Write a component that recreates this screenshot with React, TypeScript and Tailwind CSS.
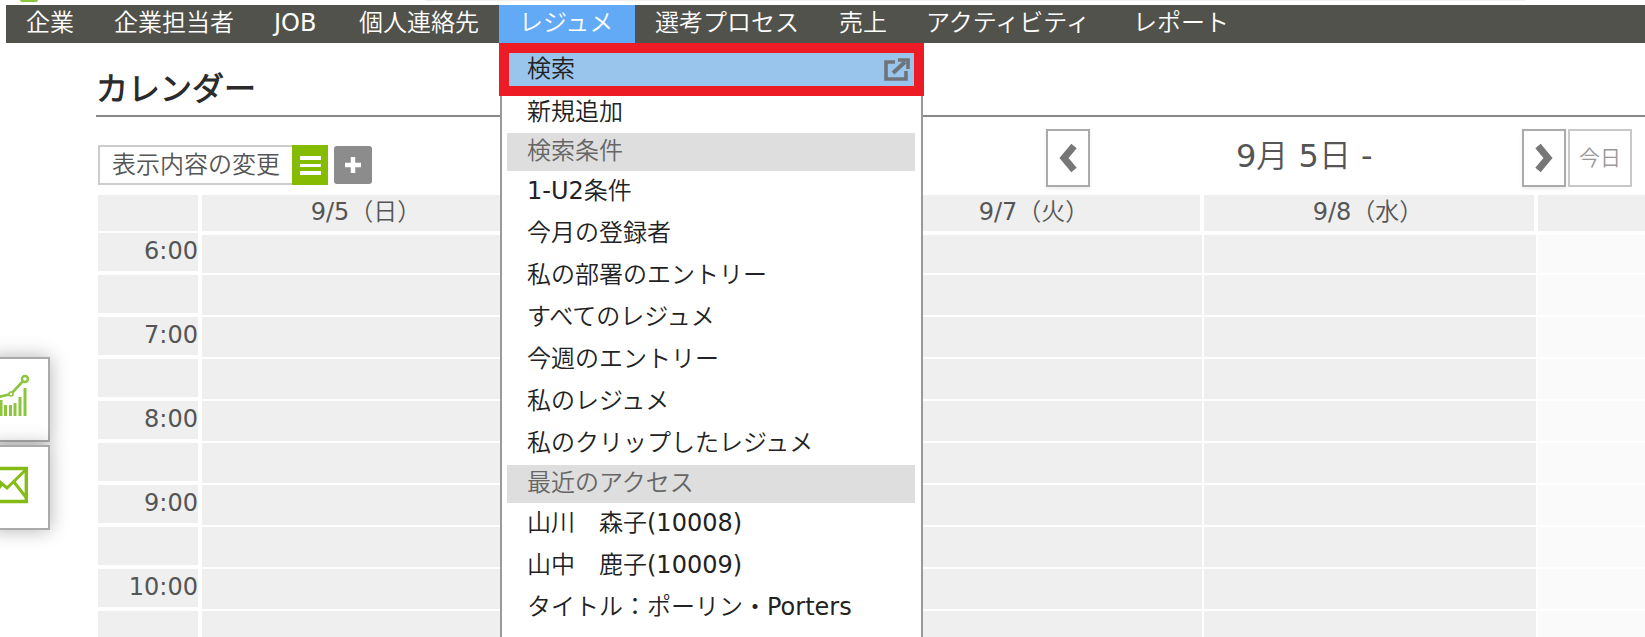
const navItems = [
  { label: "企業", width: "w-[88px]" },
  { label: "企業担当者", width: "w-[160px]" },
  { label: "JOB", width: "w-[85px]" },
  { label: "個人連絡先", width: "w-[160px]" },
  { label: "レジュメ", width: "w-[136px]", active: true },
  { label: "選考プロセス", width: "w-[184px]" },
  { label: "売上", width: "w-[87px]" },
  { label: "アクティビティ", width: "w-[207px]" },
  { label: "レポート", width: "w-[116px]" },
];
const times = ["6:00", "", "7:00", "", "8:00", "", "9:00", "", "10:00", ""];
const days = ["9/5（日）", "", "9/7（火）", "9/8（水）"];

type MenuEntry = { label: string; section?: boolean };

const menuEntries: MenuEntry[] = [
  { label: "検索条件", section: true },
  { label: "1-U2条件" },
  { label: "今月の登録者" },
  { label: "私の部署のエントリー" },
  { label: "すべてのレジュメ" },
  { label: "今週のエントリー" },
  { label: "私のレジュメ" },
  { label: "私のクリップしたレジュメ" },
  { label: "最近のアクセス", section: true },
  { label: "山川　森子(10008)" },
  { label: "山中　鹿子(10009)" },
  { label: "タイトル：ポーリン・Porters" },
];

function NavBar() {
  return (
    <nav className="ml-[6px] flex h-[38px] items-center bg-[#52524c] text-[24px] leading-none text-white">
      {navItems.map((item) => (
        <a
          key={item.label}
          className={`flex h-full items-center whitespace-nowrap pb-[2px] pl-5 ${item.width} ${item.active ? "bg-[#62aaf6]" : ""}`}
        >
          {item.label}
        </a>
      ))}
    </nav>
  );
}

function DropdownMenu() {
  return (
    <div className="absolute left-[499px] top-[43px] z-20 w-[425px]">
      <div className="box-border flex h-[53px] items-center justify-between border-[10px] border-[#ed1c24] bg-[#99c4ec] pl-[18px] pr-[3px] text-[#222]">
        <span className="pb-[2px]">検索</span>
        <svg width="27" height="24" viewBox="0 0 27 24" fill="none" stroke="#6f7478" strokeWidth="3.6">
          <path d="M11 4H2v17h20v-8" />
          <path d="M9 15 21 4" strokeWidth="4" />
          <path d="M14 2h10v9" />
        </svg>
      </div>
      <div className="mx-px border-x-2 border-[#999] bg-white pl-[5px] pr-[6px]">
        <div className="flex h-[37px] items-center pb-[6px] pl-5 text-[#222]">新規追加</div>
        {menuEntries.map((entry) =>
          entry.section ? (
            <div key={entry.label} className="flex h-[38px] items-center bg-[#dedede] pb-[3px] pl-5 text-[#666]">
              {entry.label}
            </div>
          ) : (
            <div key={entry.label} className="flex h-[42px] items-center whitespace-nowrap pb-[2px] pl-5 text-[#222]">
              {entry.label}
            </div>
          )
        )}
        <div className="h-[10px]" />
      </div>
    </div>
  );
}

function Toolbar() {
  return (
    <div className="flex h-[78px] items-start pl-[2px] pt-3">
      <div className="mt-4 flex items-start">
        <div className="box-border flex h-10 w-[194px] items-center border-2 border-r-0 border-[#ccc] pl-3 text-[24px] leading-none text-[#555]">
          表示内容の変更
        </div>
        <button className="flex h-10 w-9 flex-col items-center gap-[4px] bg-[#85bb00] pt-[11px]">
          <span className="h-1 w-[21px] bg-white" />
          <span className="h-[3px] w-[21px] bg-white" />
          <span className="h-1 w-[21px] bg-white" />
        </button>
        <button className="ml-[6px] mt-px flex h-[38px] w-[38px] items-center justify-center rounded-[3px] bg-[#8c8c8c]">
          <svg width="18" height="18" viewBox="0 0 18 18" fill="none" stroke="#fff" strokeWidth="4.5">
            <path d="M9 1v16M1 9h16" />
          </svg>
        </button>
      </div>
      <button className="ml-[674px] flex h-[58px] w-11 items-center justify-center border-2 border-[#aaa] shadow-[0_2px_4px_rgba(0,0,0,0.08)]">
        <svg className="blur-[0.6px]" width="22" height="30" viewBox="0 0 22 30" fill="none" stroke="#777" strokeWidth="7">
          <path d="M17 3 7 15l10 12" />
        </svg>
      </button>
      <div className="flex h-[58px] w-[432px] items-center pb-[4px] pl-[146px] text-[32px] leading-none text-[#555]">
        9月 5日 -
      </div>
      <button className="flex h-[58px] w-11 items-center justify-center border-2 border-[#aaa] shadow-[0_2px_4px_rgba(0,0,0,0.08)]">
        <svg className="blur-[0.6px]" width="22" height="30" viewBox="0 0 22 30" fill="none" stroke="#777" strokeWidth="7">
          <path d="m5 3 10 12L5 27" />
        </svg>
      </button>
      <button className="ml-[2px] flex h-[58px] w-16 items-center justify-center border-2 border-[#c8c8c8] text-[21px] leading-none text-[#999]">
        今日
      </button>
    </div>
  );
}

function CalendarGrid() {
  return (
    <div className="pl-[2px] text-[#555]">
      <div className="flex h-[38px] gap-1 pb-[2px]">
        <div className="w-[100px] bg-[#efefef]" />
        {days.map((day, i) => (
          <div key={i} className="flex w-[330px] items-center justify-center bg-[#efefef] pb-[3px] pr-[2px] text-[24px] leading-none">
            {day}
          </div>
        ))}
        <div className="flex-1 bg-[#efefef]" />
      </div>
      {times.map((time, i) => (
        <div key={i} className="flex h-[42px]">
          <div className="mr-1 flex h-[38px] w-[100px] items-center justify-end bg-[#efefef] pb-[3px] text-[24px] leading-none">
            {time}
          </div>
          {[0, 1, 2, 3].map((col) => (
            <div key={col} className={`mr-[2px] h-10 w-[332px] bg-[#efefef] ${i === 0 ? "border-t-2 border-white" : ""}`} />
          ))}
          <div className={`h-10 flex-1 bg-[#fafafa] ${i === 0 ? "border-t-2 border-white" : ""}`} />
        </div>
      ))}
    </div>
  );
}

function SideWidgets() {
  return (
    <div className="absolute left-[-10px] top-[357px] z-10 flex w-[60px] flex-col gap-[3px]">
      <div className="h-[85px] border-2 border-[#aaa] bg-white shadow-[0_0_18px_rgba(0,0,0,0.3)]">
        <svg width="56" height="81" viewBox="-8 359 56 81" fill="none" stroke="#8cc63f">
          <path d="M1 416v-16M5.500 416v-11M10.500 416v-11M15 416v-13M20 416v-19M25 416v-28" strokeWidth="3" />
          <path d="M-6 398 11 394 24 380" strokeWidth="2.6" />
          <circle cx="11" cy="394" r="2" strokeWidth="1.6" fill="#fff" />
          <circle cx="25" cy="379" r="3" strokeWidth="2.4" fill="#fff" />
        </svg>
      </div>
      <div className="h-[85px] border-2 border-[#aaa] bg-white shadow-[0_0_18px_rgba(0,0,0,0.3)]">
        <svg width="56" height="81" viewBox="-8 447 56 81" fill="none" stroke="#84bb14" strokeWidth="3.4">
          <path d="M-8 468.500H26.300V501.500H-8" />
          <path d="M-8 475 7 488 26.500 469" strokeWidth="3" />
          <path d="M14 482 26.500 498" strokeWidth="3" />
          <path d="M-8 497 2 484" strokeWidth="3" />
        </svg>
      </div>
    </div>
  );
}

export default function App() {
  return (
    <div className="relative h-[637px] w-[1645px] overflow-hidden bg-white font-['DejaVu_Sans','Noto_Sans_CJK_JP_DemiLight','Noto_Sans_CJK_JP',sans-serif] text-[24px] font-normal leading-none">
      <div className="relative h-[5px]">
        <div className="absolute left-[20px] top-0 h-[2px] w-[18px] rounded-b-full bg-[#8cc63f]" />
        <div className="absolute right-[120px] top-0 h-px w-[1100px] bg-[#eeeeee]" />
      </div>
      <NavBar />
      <main className="pl-[96px]">
        <h1 className="flex h-[74px] items-center border-b-2 border-[#888] pt-[20px] text-[32px] font-bold leading-none text-[#2b2b2b]">
          カレンダー
        </h1>
        <Toolbar />
        <CalendarGrid />
      </main>
      <DropdownMenu />
      <SideWidgets />
    </div>
  );
}
